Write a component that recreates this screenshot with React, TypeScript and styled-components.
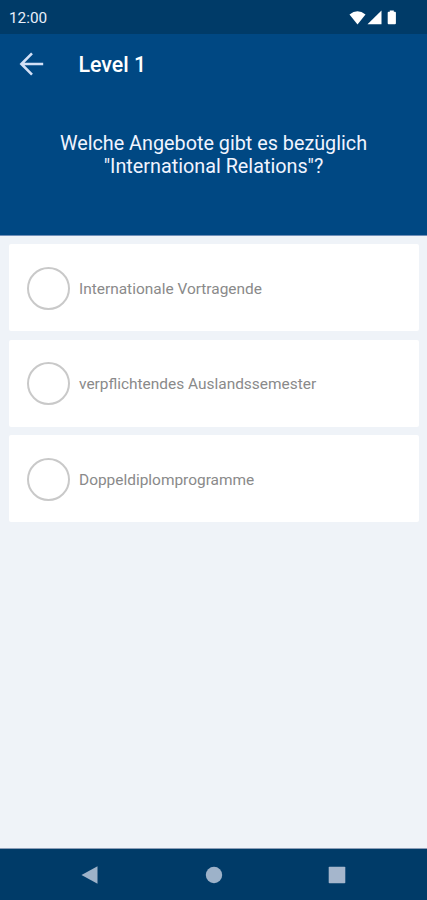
import React from "react";
import styled, { createGlobalStyle } from "styled-components";

const GlobalStyle = createGlobalStyle`
  * { box-sizing: border-box; }
  body { margin: 0; }
`;

const Screen = styled.div`
  display: flex;
  flex-direction: column;
  width: 100%;
  height: 900px;
  background: #eff3f8;
  font-family: Roboto, sans-serif;
  overflow: hidden;
`;

const StatusBar = styled.div`
  display: flex;
  align-items: center;
  justify-content: space-between;
  height: 34px;
  flex: none;
  padding: 2px 27px 0 9px;
  background: #003b68;
  color: #e9effa;
`;

const Clock = styled.span`
  font-size: 15.3px;
  font-weight: 400;
  line-height: 18px;
`;

const Header = styled.header`
  height: 202px;
  flex: none;
  background: #004883;
  border-bottom: 1px solid #6f8fb8;
  color: #fff;
`;

const Toolbar = styled.div`
  display: flex;
  align-items: center;
  height: 62px;
  padding-left: 18.5px;
`;

const BackButton = styled.button`
  display: flex;
  width: 60px;
  padding: 0 0 2px;
  border: 0;
  background: none;
  color: #d3e0f6;
`;

const Title = styled.h1`
  margin: 0;
  font-size: 21.4px;
  line-height: 26px;
  font-weight: 500;
`;

const Question = styled.p`
  margin: 36px 0 0;
  text-align: center;
  font-size: 19.8px;
  line-height: 23px;
  color: #f0f4ff;
  white-space: pre-line;
`;

const Answers = styled.main`
  flex: 1;
  display: flex;
  flex-direction: column;
  gap: 8.5px;
  padding: 8px 8px 0 9px;
`;

const Answer = styled.label`
  display: flex;
  align-items: center;
  gap: 9px;
  height: 87px;
  padding: 1px 0 0 18px;
  border-radius: 2px;
  background: #fff;
`;

const Radio = styled.span`
  width: 43px;
  height: 43px;
  border: 2px solid #c9c9c9;
  border-radius: 50%;
`;

const AnswerText = styled.span`
  padding-top: 1px;
  font-size: 15.45px;
  line-height: 20px;
  font-weight: 400;
  color: #8a8a8a;
`;

const NavBar = styled.nav`
  display: flex;
  align-items: center;
  justify-content: space-between;
  height: 52px;
  flex: none;
  padding: 0 81px;
  border-top: 1px solid #8c9eb8;
  background: #003b68;
`;

const answers = [
  "Internationale Vortragende",
  "verpflichtendes Auslandssemester",
  "Doppeldiplomprogramme",
];

export default function App() {
  return (
    <>
      <GlobalStyle />
      <Screen>
        <StatusBar>
          <Clock>12:00</Clock>
          <svg width="52" height="18" viewBox="0 0 52 18" fill="#fff">
            <path d="M1.5 5.5Q9.5-1 17.5 5.5L9.5 15.5Z" />
            <path d="M33.5 1.5v13.7H19.5Z" />
            <path d="M40.6 2.8h1.2V1.6h4v1.2H47q.9 0 .9.9v10.6q0 .9-.9.9h-6.4q-.9 0-.9-.9V3.7q0-.9.9-.9Z" />
          </svg>
        </StatusBar>
        <Header>
          <Toolbar>
            <BackButton aria-label="Zurück">
              <svg width="26" height="26" viewBox="0 0 26 26" fill="none" stroke="currentColor" strokeWidth="2.6">
                <path d="M24.2 13H2.6M13 2.4 2.4 13 13 23.6" />
              </svg>
            </BackButton>
            <Title>Level 1</Title>
          </Toolbar>
          <Question>{"Welche Angebote gibt es bezüglich\n\"International Relations\"?"}</Question>
        </Header>
        <Answers>
          {answers.map((text) => (
            <Answer key={text}>
              <Radio />
              <AnswerText>{text}</AnswerText>
            </Answer>
          ))}
        </Answers>
        <NavBar>
          <svg width="18" height="18" viewBox="0 0 18 18" fill="#9db2c9">
            <path d="M.5 9 16.5.3v17.4Z" />
          </svg>
          <svg width="18" height="18" viewBox="0 0 18 18" fill="#9db2c9">
            <circle cx="9" cy="9" r="8.2" />
          </svg>
          <svg width="18" height="18" viewBox="0 0 18 18" fill="#a5b6cc">
            <rect x=".7" y=".7" width="16.6" height="16.6" rx=".8" />
          </svg>
        </NavBar>
      </Screen>
    </>
  );
}
